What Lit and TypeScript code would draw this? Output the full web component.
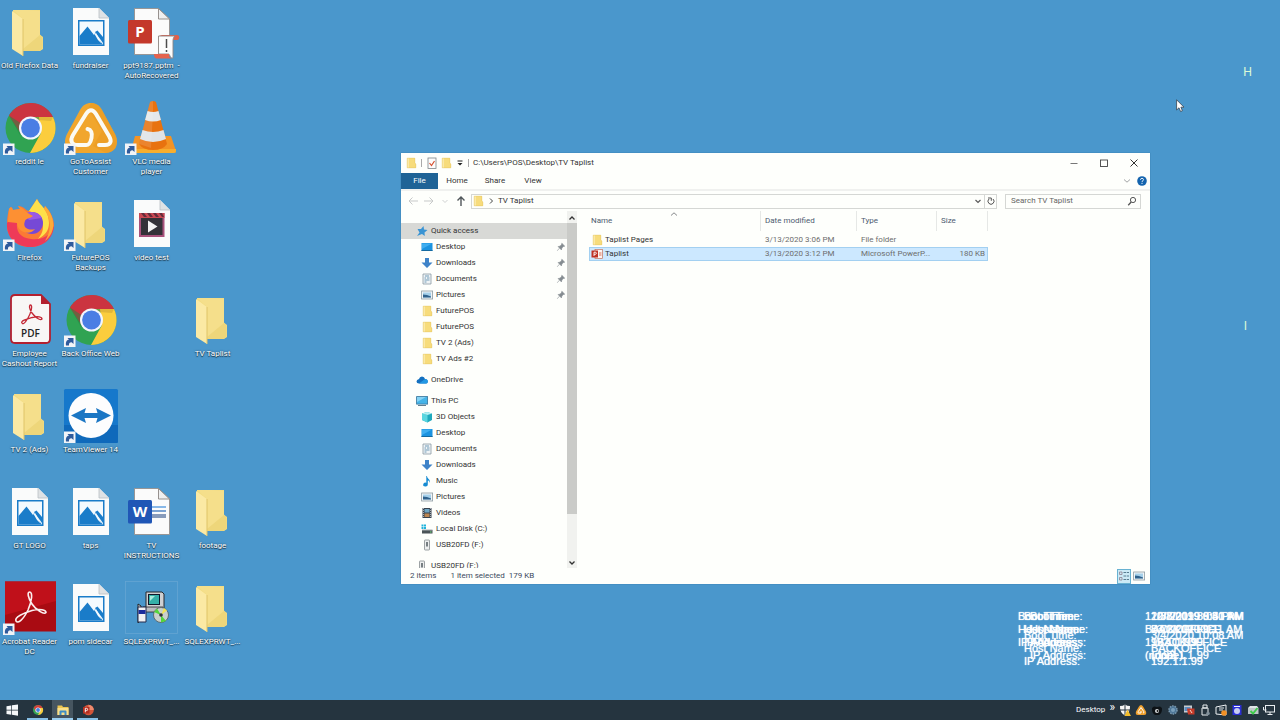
import { LitElement, html, svg, css, TemplateResult } from "lit";
import { customElement, property } from "lit/decorators.js";
import { classMap } from "lit/directives/class-map.js";

type Art = TemplateResult;

/* ---------- large desktop artwork, drawn on a 56 x 56 canvas ---------- */

const folderArt: Art = svg`
  <path d="M12 5H39V30L42 32V44L39 46H20L12 43Z" fill="#f3dd82"/>
  <path d="M39 29.500L41.500 32V44L38 46H22V32Z" fill="#eed67a"/>
  <path d="M11 6L22 14V51L11 44Z" fill="#fbe9a4"/>
  <path d="M12 5H26L39 6V30L22 44V14Z" fill="#f5df8b"/>
  <path d="M22 14V51" stroke="#dfc468" stroke-width="1" fill="none"/>`;

const pageArt: Art = svg`
  <path d="M10 3H36L46 13V50H10Z" fill="#fafbfb"/>
  <path d="M36 3V13H46Z" fill="#dfe2e4"/>
  <path d="M36 3V13H46" fill="none" stroke="#b9c0c4" stroke-width=".8"/>`;

const officePageArt: Art = svg`
  <path d="M10.500 3.500H34.500L45.500 14V49.500H10.500Z" fill="#fbfbfb" stroke="#96908c" stroke-width=".9"/>
  <path d="M34.500 3.500V14H45.500Z" fill="#efefef" stroke="#8c8682" stroke-width=".9"/>`;

const chromeArt: Art = svg`
  <circle cx="28.500" cy="27" r="25" fill="#30a352"/>
  <path d="M7 14.500A25 25 0 0 1 51 16H28.500L19 33Z" fill="#cb3440"/>
  <path d="M51 16A25 25 0 0 1 28 52L38.500 33L37 16Z" fill="#fbcd3d"/>
  <path d="M28.500 16H51L49 20L36 19Z" fill="#c49c33" opacity=".45"/>
  <path d="M7 14.500L18 34L21 31L18.500 22Z" fill="#1b8a41" opacity=".5"/>
  <circle cx="28.500" cy="27" r="11.500" fill="#f4f6fb"/>
  <circle cx="28.500" cy="27" r="9.400" fill="#4a7ee4"/>`;

const artwork: Record<string, Art> = {
  folder: folderArt,
  chrome: chromeArt,
  image: svg`${pageArt}
    <rect x="15" y="15" width="26.500" height="26" fill="#1a7cc9"/>
    <rect x="16.500" y="16.500" width="23.500" height="23" fill="#f4fafe"/>
    <path d="M16.500 31L24.500 21.500L31 30L32.500 27.500L35 34L40 39.500H16.500Z" fill="#1a7cc9"/>
    <path d="M32 27L34.500 25.500L40 32V38Z" fill="#1a7cc9"/>
    <path d="M31.500 29L33 28L38.500 38.500L35 35Z" fill="#f4fafe"/>`,
  recovered: svg`${officePageArt}
    <rect x="4" y="15" width="24" height="23.500" rx="1.500" fill="#c4382b"/>
    <text x="16" y="32" class="mark">P</text>
    <path d="M35 30H53C56 30 56 35 53 35H50Z" fill="#e0604c"/>
    <path d="M34.500 31H51C49.500 32 49 34 49 36V53C46 54 46 49 44.500 49H34.500Z" fill="#fcfcfc" stroke="#8c8481" stroke-width=".9"/>
    <path d="M30 49H45C45 51 45.500 53 47.500 53.500H33C30.500 53.500 30 51 30 49Z" fill="#e4634e"/>
    <path d="M42.500 34V43M42.500 45V47" stroke="#4c4c4c" stroke-width="1.500"/>`,
  goto: svg`
    <path d="M28 2C33 2 36 4 39 9L52 33C57 43 52 52 43 52H13C4 52 -1 43 4 33L17 9C20 4 23 2 28 2Z" fill="#f1a62d"/>
    <path d="M28 2C33 2 36 4 39 9L52 33C57 43 52 52 43 52L30 45L39 30L25 8Z" fill="#e99620" opacity=".45"/>
    <path d="M24.500 28Q30 29 28.500 37T22 44H15C8 44 7 39 10 34L23 13C26 8 30 8 33 13L46 35C49 40 48 44 42 44H36" fill="none" stroke="#fbfaf3" stroke-width="4" stroke-linejoin="round" stroke-linecap="round"/>`,
  vlc: svg`
    <path d="M11 35H47L52 50Q52 52 50 52H9Q7 52 7 50Z" fill="#f39324"/>
    <path d="M7 48H52V50Q52 52 50 52H9Q7 52 7 50Z" fill="#f7ae2e"/>
    <path d="M26 1Q29 -1 32 1L43 43Q39 49 29 49Q19 49 15 43Z" fill="#e8720f"/>
    <path d="M23.500 10Q29 12 34.500 10L37 19Q29 22 21 19Z" fill="#e4e8ea"/>
    <path d="M18.500 29Q29 33 39.500 29L42 38Q29 44 16 38Z" fill="#dfe3e6"/>
    <path d="M26 1Q27 0 29 0V12L27 47L15 43Z" fill="#fff" opacity=".13"/>`,
  firefox: svg`
    <path d="M7 12C9 9 10 10 11 13L18 12L16 9C22 9 24 14 27 14L35 2C38 5 36 8 42 12L43 9C49 15 52 22 52 29C50 42 41 50 28 50C14 50 4 40 5 26C5 21 6 16 7 12Z" fill="#fb7a35"/>
    <path d="M5 26C4 41 15 50 28 50C41 50 51 42 52 29C48 40 39 43 29 42C18 41 14 34 15 26L9 21Z" fill="#ee3a58"/>
    <path d="M27 14L35 2C37 8 47 12 47 26C47 34 43 38 36 42C47 29 38 18 27 14Z" fill="#fee04a"/>
    <path d="M42 12L43 9C53 19 55 35 43 44C50 34 49 21 42 12Z" fill="#fdab38"/>
    <circle cx="30" cy="26" r="11" fill="#7649d6"/>
    <path d="M22 17C28 13 37 15 40 21L27 23Z" fill="#9a5ae6"/>
    <path d="M7 12C9 9 10 10 11 13L18 12L16 9C22 11 24 16 31 19C27 22 24 21 23 24C20 31 27 34 33 32C29 38 16 37 15 26L6 25Z" fill="#fd9033"/>`,
  video: svg`${pageArt}
    <rect x="15" y="16" width="25.500" height="24" fill="#a8527c"/>
    <path d="M15 16H40.500V21H15Z" fill="#ca4953"/>
    <path d="M17 16l3 4h3l-3-4zM23 16l3 4h3l-3-4zM29 16l3 4h3l-3-4zM35 16l3 4h2l-2-4z" fill="#632c3b"/>
    <rect x="17" y="21" width="21.500" height="17" fill="#333238"/>
    <path d="M24 23.500L33.500 29.500L24 35.500Z" fill="#f4f4f4"/>`,
  pdf: svg`
    <path d="M13 2H39L48 11V46Q48 50 44 50H13Q9 50 9 46V6Q9 2 13 2Z" fill="#f8f6f5" stroke="#b3202f" stroke-width="1.800"/>
    <path d="M39 2V11H48Z" fill="#b3202f"/>
    <path d="M20 30C18 28 25 26 30 24.500C36 23 40 24 40 26C38 28 33 24 30 20C27 16 27 12 28.500 12C31 12 29 20 26 25C23 30 21 32 20 30Z" fill="none" stroke="#c42735" stroke-width="1.300"/>
    <text x="28.500" y="44" class="pdf">PDF</text>`,
  teamviewer: svg`
    <rect x="1" y="0" width="54" height="54" rx="1.500" fill="#1678cb"/>
    <path d="M1 36H55V52.500Q55 54 53.500 54H2.500Q1 54 1 52.500Z" fill="#0f69bb"/>
    <circle cx="28" cy="26.500" r="22.500" fill="#fdfdfe"/>
    <path d="M8 26.500L23 19L21.500 24H34.500L33 19L48 26.500L33 34L34.500 29H21.500L23 34Z" fill="#1b76c4"/>`,
  word: svg`${officePageArt}
    <path d="M28 22H42" stroke="#4a93dd" stroke-width="1.300"/>
    <path d="M28 26H42" stroke="#3773bd" stroke-width="1.300"/>
    <path d="M28 30H42M28 32H42" stroke="#163d7c" stroke-width="1.100"/>
    <rect x="4" y="15" width="24" height="23.500" rx="1.500" fill="#2056b6"/>
    <text x="16" y="32" class="mark">W</text>`,
  acrobat: svg`
    <rect x="3" y="0.500" width="51" height="50" fill="#a90b12"/>
    <path d="M3 .5H54V20L3 34Z" fill="#c0101a"/>
    <path d="M14 40C12 36 22 32 30 29.500C38 27.500 44 29 44 31.500C42 34 34 29 30 23C26 17 25 11 27.500 11C31 11 30 20 26 29C21 39 16 43 14 40Z" fill="none" stroke="#fbeeee" stroke-width="1.600"/>`,
  installer: svg`
    <rect x="1.500" y="0.500" width="52" height="52" fill="none" stroke="#65a5d3" stroke-width=".8"/>
    <path d="M22 11H38L40 13V29L38 30H22Z" fill="#cfd0d2" stroke="#26282c" stroke-width="1"/>
    <rect x="24.500" y="13.500" width="11" height="10" fill="#35b0a8" stroke="#10182b" stroke-width="1"/>
    <path d="M26 15H31L26 20Z" fill="#a6ecdd"/>
    <path d="M19 26H39L37 31H20Z" fill="#b9bbbf" stroke="#26282c" stroke-width=".8"/>
    <path d="M14 23L17 25V39L14 42Z" fill="#d8d8dc" stroke="#222"/>
    <path d="M14 26H22V41H14Z" fill="#f1f1f3" stroke="#222a4d" stroke-width="1"/>
    <rect x="14.500" y="29" width="7" height="4" fill="#1b2c9c"/>
    <circle cx="37" cy="34" r="7.500" fill="#c9d0cc" stroke="#525c5c" stroke-width=".8"/>
    <path d="M37 34L30 31L33 27.500ZM37 34L42 40L37 41.500Z" fill="#53d63c"/>
    <path d="M37 34L40 27L43 29.500Z" fill="#f1e556"/>
    <circle cx="37" cy="34" r="1.800" fill="#333"/>`,
};

const shortcutArt: Art = svg`
  <rect x="1" y="42.500" width="11.500" height="11.500" fill="#f2f4f7"/>
  <path d="M3 52.500C2.500 48.500 4 46.800 6 46.800L4.500 45H10.500V51L8.600 49.300C6.500 49.300 5.800 50.500 6 52.500Z" fill="#2f5b9c"/>`;

/* ---------- small artwork, drawn on a 12 x 12 canvas ---------- */

const glyphs: Record<string, Art> = {
  folder: svg`<path d="M2 1H10V6L11 7V11H2Z" fill="#f7dc7c"/><path d="M2 1H4V11H2Z" fill="#fbe9a6"/><path d="M2.200 1.200H9.800V6L10.800 7V10.800H2.200Z" fill="none" stroke="#e5c667" stroke-width=".5"/>`,
  star: svg`<path d="M7.500 1L8 4.500L11.500 5L8.500 7.500L8.800 11L6 9L1 11L3.500 7.500L1.500 4L5 4Z" fill="#3a94d3"/>`,
  desktop: svg`<rect x=".5" y="2" width="11" height="8" fill="#1b93e0"/><path d="M1 2.500H11L1 8Z" fill="#3faef0"/><path d="M.5 9.500H11.500" stroke="#14699f"/>`,
  download: svg`<path d="M4 1H8V5.500H11.500L6 11L.5 5.500H4Z" fill="#3e83c8"/>`,
  document: svg`<path d="M2 1H10V11H2Z" fill="#eef3f5" stroke="#8b9ba3" stroke-width=".8"/><path d="M4 3H8M3.500 5H5M6 5H8.500M3.500 7H8.500M3.500 9H5.500" stroke="#5187a7" stroke-width=".8"/>`,
  picture: svg`<rect x=".6" y="2" width="11" height="8" fill="#f1f5f7" stroke="#8e9ba2" stroke-width=".8"/><rect x="2" y="3.500" width="8" height="5" fill="#a5d0ea"/><path d="M2 5.500L6 6L10 7.500V8.500H2Z" fill="#30628c"/>`,
  cloud: svg`<path d="M3 9.500Q.5 9.500 .5 7.500T3 5Q3.500 2.500 6 2.500T9 5Q11.800 5 11.800 7.500T9.500 9.500Z" fill="#1470c0"/><path d="M3 9.500L9 5Q11.800 5 11.800 7.500T9.500 9.500Z" fill="#2398e4"/>`,
  pc: svg`<rect x=".6" y="1.600" width="11" height="7.500" fill="#45b4e8" stroke="#39749a" stroke-width=".8"/><path d="M1 2H10L1 7Z" fill="#86d3f5"/><path d="M2 10.500H10" stroke="#617f90"/>`,
  cube: svg`<path d="M1 2.500L6 1L11 2.500V9L6.500 11.500L1 9Z" fill="#1fa9bd"/><path d="M1 2.500L6.500 4V11.500L1 9Z" fill="#59d6df"/><path d="M1 2.500L6 1L11 2.500L6.500 4Z" fill="#b2f0f2"/>`,
  music: svg`<path d="M6 1C6 4 10 4 8.500 8C8.500 6 7.500 5.500 6.800 5.500V9.500A2.300 1.900 0 1 1 5.300 7.800V1Z" fill="#168bd2"/>`,
  film: svg`<rect x="1.500" y="1" width="9" height="10" fill="#38424e"/><rect x="3.500" y="2" width="5" height="3.500" fill="#6fa6c4"/><rect x="3.500" y="6.500" width="5" height="3.500" fill="#bb8551"/><path d="M2.500 1V11M9.500 1V11" stroke="#d2d8dc" stroke-width=".7" stroke-dasharray="1"/>`,
  disk: svg`<path d="M.5 1.500H2.500V3.500H.5ZM3 1.500H5V3.500H3ZM.5 4H2.500V6H.5ZM3 4H5V6H3Z" fill="#20b3dc"/><rect x="1" y="7" width="10.500" height="3.500" fill="#4b5458"/><path d="M1 7H11.500" stroke="#a9b1b4"/><path d="M9 9H10.500" stroke="#6de07a"/>`,
  usb: svg`<rect x="3.500" y="1" width="5" height="10" rx=".6" fill="#eceeee" stroke="#868d8f" stroke-width=".8"/><rect x="5" y="3" width="2" height="4.500" fill="#777f82"/>`,
  slides: svg`<rect x="4" y="1.500" width="7.500" height="9" fill="#fdf4f1" stroke="#c2715c" stroke-width=".7"/><path d="M8 5H10.500M8 7H10.500" stroke="#dd7057"/><rect x=".5" y="2.500" width="6.500" height="7" fill="#bf3224"/><path d="M3 8V4.200H4.300A1 1 0 0 1 4.300 6.300H3" fill="none" stroke="#fff" stroke-width=".9"/>`,
  pin: svg`<path d="M7 1.500L10.500 5L8.500 5.500L7 7.500L6.500 9.500L2.500 5.500L4.500 5L6.500 3.500ZM4 7.500L1.500 10.500" fill="#848b90" stroke="#848b90" stroke-width=".7"/>`,
  check: svg`<rect x="2" y="1" width="8" height="10.500" fill="#fdfdfd" stroke="#7d8488" stroke-width=".8"/><path d="M3.500 6L5.500 8.500L8.500 4" fill="none" stroke="#d6502f" stroke-width="1.200"/>`,
  caret: svg`<path d="M3.500 4H8.500" stroke="#222"/><path d="M3.500 6H8.500L6 8.500Z" fill="#222"/>`,
  back: svg`<path d="M11 6H2M5.500 2.500L2 6L5.500 9.500" fill="none" stroke="#c7c9c9"/>`,
  forward: svg`<path d="M1 6H10M6.500 2.500L10 6L6.500 9.500" fill="none" stroke="#c7c9c9"/>`,
  recent: svg`<path d="M3.500 5L6 7.500L8.500 5" fill="none" stroke="#d0d2d2"/>`,
  up: svg`<path d="M6 11V2M2.500 5.500L6 2L9.500 5.500" fill="none" stroke="#50565a" stroke-width="1.400"/>`,
  right: svg`<path d="M5 3.500L7.500 6L5 8.500" fill="none" stroke="#444" stroke-width="1"/>`,
  down: svg`<path d="M3.500 5L6 7.500L8.500 5" fill="none" stroke="#5a5a5a" stroke-width="1.200"/>`,
  fold: svg`<path d="M3 4.500L6 7.200L9 4.500" fill="none" stroke="#96999b" stroke-width=".9"/>`,
  sort: svg`<path d="M3 7.500L6 4.800L9 7.500" fill="none" stroke="#787b7e" stroke-width=".9"/>`,
  top: svg`<path d="M3.500 7.500L6 5L8.500 7.500" fill="none" stroke="#333" stroke-width="1.300"/>`,
  bottom: svg`<path d="M3.500 4.500L6 7L8.500 4.500" fill="none" stroke="#333" stroke-width="1.300"/>`,
  refresh: svg`<path d="M4 4A3 3 0 1 0 8 4M3 3H6.300V5.800" fill="none" stroke="#555" stroke-width="1"/>`,
  search: svg`<circle cx="7" cy="5" r="2.600" fill="none" stroke="#555"/><path d="M5.200 7L2.200 10.200" stroke="#555" stroke-width="1.300"/>`,
  help: svg`<circle cx="6" cy="6" r="4.800" fill="#1464ae"/><path d="M4.500 4.800Q4.600 3.300 6 3.300T7.500 4.700Q7.500 5.500 6 6.500V7.200M6 8V9" fill="none" stroke="#fff" stroke-width=".9"/>`,
  minimise: svg`<path d="M2.500 6.500H9.500" stroke="#777" stroke-width="1"/>`,
  maximise: svg`<rect x="2.500" y="3" width="7" height="6.500" fill="none" stroke="#444" stroke-width=".9"/>`,
  close: svg`<path d="M2.500 2.500L9.500 9.500M9.500 2.500L2.500 9.500" stroke="#333"/>`,
  details: svg`<path d="M1.500 2H4V4.500H1.500ZM1.500 7.500H4V10H1.500Z" fill="none" stroke="#8f8290" stroke-width=".8"/><path d="M5.500 2.500H8M8.700 2.500H11M5.500 6H8M8.700 6H11M5.500 9.500H8M8.700 9.500H11" stroke="#4c7286" stroke-width=".9"/>`,
  windows: svg`<path d="M.5 2.200L5.300 1.400V5.700H.5ZM6 1.300L12 .4V5.700H6ZM.5 6.400H5.300V10.700L.5 10ZM6 6.400H12V11.700L6 10.800Z" fill="#f5f8fa"/>`,
  chrome: svg`<circle cx="6" cy="6" r="5" fill="#33a455"/><path d="M1.700 3.500A5 5 0 0 1 10.700 4H6L4 8Z" fill="#d43f3a"/><path d="M10.700 4A5 5 0 0 1 6 11L8 7V4Z" fill="#f9cb3e"/><circle cx="6" cy="6" r="2.600" fill="#f2f5f9"/><circle cx="6" cy="6" r="1.900" fill="#467fe0"/>`,
  explorer: svg`<path d="M.5 1.500H5L6 3H11.500V11H.5Z" fill="#eec650"/><path d="M.5 4H11.500V11H.5Z" fill="#fbe08a"/><path d="M2.500 11V7.500Q2.500 6.500 3.500 6.500H8.500Q9.500 6.500 9.500 7.500V11H7.500V8.500H4.500V11Z" fill="#3e8dc6"/>`,
  powerpoint: svg`<circle cx="6.500" cy="6" r="5.300" fill="#d35438"/><path d="M6.500 .7A5.300 5.300 0 0 1 11.800 6H6.500Z" fill="#ee8a6d"/><rect x="1" y="3" width="6.500" height="6.500" fill="#b52e20"/><path d="M3.300 8.300V4.300H4.500A1.100 1.100 0 0 1 4.500 6.600H3.300" fill="none" stroke="#fff" stroke-width=".9"/>`,
  shield: svg`<path d="M6 .5Q8 2 11 2Q11.500 8.500 6 11.500Q.5 8.500 1 2Q4 2 6 .5Z" fill="#f5f5f5"/><path d="M6 .5V11.500M1 6H11" stroke="#24333e"/><path d="M8.500 5.500L12 12H5.500Z" fill="#f2bd2c"/>`,
  assist: svg`<path d="M6 1Q7.300 1 8 2.500L11 7.500Q12 11 9 11H3Q0 11 1 7.500L4 2.500Q4.700 1 6 1Z" fill="#f0a02d"/><path d="M6 7V9H3.500Q2.500 9 3.300 7.500L6 3.500L8.700 7.500Q9.500 9 8 9" fill="none" stroke="#fff"/>`,
  eye: svg`<path d="M1 4L3 2.500L6 3L9 2.500L11 4Q11.500 9 8 11H4Q.5 9 1 4Z" fill="#0d1216"/><circle cx="6" cy="7" r="2" fill="#d7dbdd"/><circle cx="6.500" cy="7" r=".9" fill="#111"/>`,
  gear: svg`<circle cx="6" cy="6" r="4" fill="#4c7597" stroke="#7795ab" stroke-width="1.600" stroke-dasharray="1.500 1"/><circle cx="6" cy="6" r="2" fill="#7ba0bb"/>`,
  alert: svg`<rect x="1" y="1.500" width="8" height="7" fill="#c8ccd1"/><rect x="1.500" y="3" width="6" height="4" fill="#5d8ec2"/><path d="M4 4.500H11.500V10.500H5Z" fill="#c63b2a"/><path d="M7 6L9 9" stroke="#f2d9c9"/>`,
  eject: svg`<path d="M4 1H8V4H4Z" fill="none" stroke="#e8ecef"/><path d="M3 4H9V11H3Z" fill="none" stroke="#e8ecef"/><circle cx="9" cy="9.500" r="1.800" fill="#80909b"/>`,
  sync: svg`<path d="M1 3L11 1V11L1 10Z" fill="none" stroke="#eef1f3"/><path d="M4 4H9M4 6H8" stroke="#dfe5e9"/><circle cx="9" cy="9" r="2.800" fill="#f39126"/>`,
  badge: svg`<path d="M1.500 1H10.500V11H1.500Z" fill="#2b2ed4"/><circle cx="6" cy="7" r="3" fill="#c9cdf3"/><path d="M3 2.500H9" stroke="#f0f0ff"/>`,
  drive: svg`<path d="M1 4H11.500V10H1Z" fill="#bfc7ca"/><path d="M1 4L3 2H10L11.500 4Z" fill="#dfe5e7"/><path d="M3.500 7L6 9.500L10.500 4" fill="none" stroke="#3ecc4b" stroke-width="1.900"/>`,
  network: svg`<rect x="2.500" y="1.500" width="9" height="6.500" fill="none" stroke="#e9edf0"/><path d="M.5 3V6H3.500M4.500 10.500H9.500M7 8V10.500" fill="none" stroke="#e9edf0"/>`,
};

@customElement("small-glyph")
class SmallGlyph extends LitElement {
  @property() name = "folder";
  static styles = css`
    :host { display: inline-flex; flex: none; width: 12px; height: 12px; }
    svg { width: 100%; height: 100%; }
  `;
  render() {
    return html`<svg viewBox="0 0 12 12" aria-hidden="true">${glyphs[this.name]}</svg>`;
  }
}

@customElement("desktop-icon")
class DesktopIcon extends LitElement {
  @property() art = "folder";
  @property() label = "";
  @property({ type: Boolean }) shortcut = false;
  static styles = css`
    :host { display: flex; justify-content: center; min-width: 0; }
    .icon {
      display: flex; flex-direction: column; align-items: center;
      border: 0; padding: 0; background: none; color: #fff;
      font: 8px/10px Roboto, "Open Sans", sans-serif;
      text-shadow: 0 1px 1px #000a, 0 0 2px #0008;
    }
    .art { width: 56px; height: 56px; flex: none; }
    .label { white-space: pre; text-align: center; }
    .mark { font: bold 15px "Open Sans", sans-serif; fill: #fff; text-anchor: middle; text-shadow: none; }
    .pdf { font: 600 10px "Open Sans", sans-serif; fill: #222; text-anchor: middle; text-shadow: none; }
  `;
  render() {
    return html`<button class="icon">
      <svg class="art" viewBox="0 0 56 56" aria-hidden="true">${artwork[this.art]}${this.shortcut ? shortcutArt : null}</svg>
      <span class="label">${this.label}</span>
    </button>`;
  }
}

interface TreeItem { icon: string; text: string; root?: boolean; pinned?: boolean; active?: boolean; }

const tree: TreeItem[] = [
  { icon: "star", text: "Quick access", root: true, active: true },
  { icon: "desktop", text: "Desktop", pinned: true },
  { icon: "download", text: "Downloads", pinned: true },
  { icon: "document", text: "Documents", pinned: true },
  { icon: "picture", text: "Pictures", pinned: true },
  { icon: "folder", text: "FuturePOS" },
  { icon: "folder", text: "FuturePOS" },
  { icon: "folder", text: "TV 2 (Ads)" },
  { icon: "folder", text: "TV Ads #2" },
  { icon: "cloud", text: "OneDrive", root: true },
  { icon: "pc", text: "This PC", root: true },
  { icon: "cube", text: "3D Objects" },
  { icon: "desktop", text: "Desktop" },
  { icon: "document", text: "Documents" },
  { icon: "download", text: "Downloads" },
  { icon: "music", text: "Music" },
  { icon: "picture", text: "Pictures" },
  { icon: "film", text: "Videos" },
  { icon: "disk", text: "Local Disk (C:)" },
  { icon: "usb", text: "USB20FD (F:)" },
  { icon: "usb", text: "USB20FD (F:)", root: true },
];

const files = [
  { icon: "folder", name: "Taplist Pages", date: "3/13/2020 3:06 PM", type: "File folder", size: "", selected: false },
  { icon: "slides", name: "Taplist", date: "3/13/2020 3:12 PM", type: "Microsoft PowerP...", size: "180 KB", selected: true },
];

@customElement("explorer-window")
class ExplorerWindow extends LitElement {
  static styles = css`
    :host {
      display: flex; flex-direction: column; background: #fefffc; color: #333;
      font: 8px/16px Roboto, "Open Sans", sans-serif; box-shadow: 0 0 1px #2b6c9c;
    }
    button, input { font: inherit; color: inherit; border: 0; padding: 0; background: none; }
    button { display: inline-flex; align-items: center; justify-content: center; }
    .title { display: flex; align-items: center; height: 20px; padding-left: 4px; gap: 4px; }
    .title .bar { width: 1px; height: 8px; background: #aaa; }
    .title .quick { display: flex; align-items: center; gap: 2px; }
    .title .path { flex: 1; }
    .title .control { width: 30px; height: 20px; }
    .title .controls { display: flex; padding-right: 1px; }
    .tabs { display: flex; height: 16px; align-items: stretch; border-bottom: 2px solid #f0f1ef; }
    .tab { width: 38px; }
    .tab.file { background: #1f6396; color: #fff; width: 37px; }
    .tabs .end { margin-left: auto; display: flex; align-items: center; gap: 3px; padding-right: 2px; }
    .address { display: flex; align-items: center; height: 20px; padding: 0 9px 0 6px; gap: 8px; }
    .address .nav { display: flex; align-items: center; gap: 4px; }
    .crumbs { flex: 1; display: flex; align-items: center; gap: 2px; height: 13px; border: 1px solid #d5d7d4; margin-left: -4px; }
    .crumbs .drop { margin-left: auto; border-right: 1px solid #d5d7d4; height: 13px; }
    .crumbs .reload { width: 10px; }
    .crumbs { gap: 1px; }
    .search { display: flex; align-items: center; width: 127px; height: 13px; border: 1px solid #d5d7d4; padding: 0 2px 0 5px; }
    .search input { flex: 1; min-width: 0; height: 13px; outline: 0; }
    .search input::placeholder { color: #666; opacity: 1; }
    .body { flex: 1; display: flex; min-height: 0; }
    .tree { flex: none; width: 166px; margin: 0; padding: 12px 0 0; list-style: none; overflow: hidden; box-sizing: border-box; }
    .node { display: flex; align-items: center; height: 16px; gap: 3px; padding: 0 1px 0 20px; }
    .node.root { padding-left: 15px; margin-top: 5px; }
    .node.active { background: #d8d9d6; margin-top: 0; }
    .node .pin { margin-left: auto; width: 10px; height: 10px; }
    .scroll { flex: none; display: flex; flex-direction: column; width: 10px; background: #f1f2ef; padding-top: 2px; }
    .scroll button { height: 10px; }
    .scroll .thumb { flex: 0 0 82%; background: #cacbc8; }
    .scroll .last { margin-top: auto; }
    .list { flex: 1; padding: 0 12px; }
    table { border-collapse: separate; border-spacing: 0; table-layout: fixed; width: 399px; line-height: 14px; }
    th, td { box-sizing: border-box; }
    th { font-weight: 400; text-align: left; color: #4d5b70; height: 20px; padding: 0 0 0 4px; border-right: 1px solid #e6e8e6; }
    th:first-child { padding-left: 2px; }
    th .head { display: flex; align-items: center; }
    th .sort { position: absolute; transform: translate(77px, -7px); }
    .name { width: 172px; } .date { width: 96px; } .type { width: 80px; } .size { width: 51px; }
    td { height: 14px; padding: 0 0 0 4px; color: #6d6d6d; white-space: nowrap; }
    td:first-child { padding-left: 2px; color: #333; }
    td:last-child { text-align: right; padding-right: 3px; }
    .spacer td { height: 2px; line-height: 0; }
    .entry { display: flex; align-items: center; gap: 2px; }
    .selected { background: #cce8ff; outline: 1px solid #a3d0f1; outline-offset: -1px; }
    .status { display: flex; align-items: center; height: 16px; padding: 0 4px 0 9px; gap: 14px; color: #3c4a60; }
    .status .views { margin-left: auto; display: flex; gap: 1px; align-items: center; }
    .views button { width: 14px; height: 15px; }
    .views .on { background: #cbeaf6; box-shadow: inset 0 0 0 1px #68b2d2; }
  `;
  render() {
    return html`
      <header class="title">
        <small-glyph name="folder"></small-glyph><span class="bar"></span>
        <span class="quick">
          <button aria-label="Properties"><small-glyph name="check"></small-glyph></button>
          <button aria-label="New folder"><small-glyph name="folder"></small-glyph></button>
          <button aria-label="Customize"><small-glyph name="caret"></small-glyph></button>
          <span class="bar"></span>
        </span>
        <span class="path">C:\\Users\\POS\\Desktop\\TV Taplist</span>
        <span class="controls">
          <button class="control" aria-label="Minimize"><small-glyph name="minimise"></small-glyph></button>
          <button class="control" aria-label="Maximize"><small-glyph name="maximise"></small-glyph></button>
          <button class="control" aria-label="Close"><small-glyph name="close"></small-glyph></button>
        </span>
      </header>
      <nav class="tabs">
        <button class="tab file">File</button>
        <button class="tab">Home</button>
        <button class="tab">Share</button>
        <button class="tab">View</button>
        <span class="end">
          <button aria-label="Expand ribbon"><small-glyph name="fold"></small-glyph></button>
          <button aria-label="Help"><small-glyph name="help"></small-glyph></button>
        </span>
      </nav>
      <div class="address">
        <span class="nav">
          ${["back", "forward", "recent", "up"].map(n => html`<button aria-label=${n}><small-glyph name=${n}></small-glyph></button>`)}
        </span>
        <div class="crumbs">
          <small-glyph name="folder"></small-glyph><small-glyph name="right"></small-glyph>
          <button>TV Taplist</button>
          <button class="drop" aria-label="Previous locations"><small-glyph name="down"></small-glyph></button>
          <button class="reload" aria-label="Refresh"><small-glyph name="refresh"></small-glyph></button>
        </div>
        <label class="search">
          <input type="text" placeholder="Search TV Taplist" aria-label="Search TV Taplist" />
          <small-glyph name="search"></small-glyph>
        </label>
      </div>
      <div class="body">
        <ul class="tree">
          ${tree.map(t => html`<li class=${classMap({ node: true, root: !!t.root, active: !!t.active })}>
            <small-glyph name=${t.icon}></small-glyph><span>${t.text}</span>
            ${t.pinned ? html`<small-glyph class="pin" name="pin"></small-glyph>` : null}
          </li>`)}
        </ul>
        <div class="scroll">
          <button aria-label="Scroll up"><small-glyph name="top"></small-glyph></button>
          <div class="thumb"></div>
          <button class="last" aria-label="Scroll down"><small-glyph name="bottom"></small-glyph></button>
        </div>
        <div class="list">
          <table>
            <thead><tr>
              <th class="name"><span class="head">Name<small-glyph class="sort" name="sort"></small-glyph></span></th>
              <th class="date">Date modified</th><th class="type">Type</th><th class="size">Size</th>
            </tr></thead>
            <tbody>
              <tr class="spacer"><td colspan="4"></td></tr>
              ${files.map(f => html`<tr class=${classMap({ selected: f.selected })}>
                <td><span class="entry"><small-glyph name=${f.icon}></small-glyph>${f.name}</span></td>
                <td>${f.date}</td><td>${f.type}</td><td>${f.size}</td>
              </tr>`)}
            </tbody>
          </table>
        </div>
      </div>
      <footer class="status">
        <span>2 items</span><span>1 item selected&nbsp; 179 KB</span>
        <span class="views">
          <button class="on" aria-label="Details"><small-glyph name="details"></small-glyph></button>
          <button aria-label="Large icons"><small-glyph name="picture"></small-glyph></button>
        </span>
      </footer>`;
  }
}

interface Shortcut { art: string; label: string; col: number; row: number; link?: boolean; }

const shortcuts: Shortcut[] = [
  { art: "folder", label: "Old Firefox Data", col: 1, row: 1 },
  { art: "image", label: "fundraiser", col: 2, row: 1 },
  { art: "recovered", label: "ppt9187.pptm  -\nAutoRecovered", col: 3, row: 1 },
  { art: "chrome", label: "reddit le", col: 1, row: 2, link: true },
  { art: "goto", label: "GoToAssist\nCustomer", col: 2, row: 2, link: true },
  { art: "vlc", label: "VLC media\nplayer", col: 3, row: 2, link: true },
  { art: "firefox", label: "Firefox", col: 1, row: 3, link: true },
  { art: "folder", label: "FuturePOS\nBackups", col: 2, row: 3, link: true },
  { art: "video", label: "video test", col: 3, row: 3 },
  { art: "pdf", label: "Employee\nCashout Report", col: 1, row: 4 },
  { art: "chrome", label: "Back Office Web", col: 2, row: 4, link: true },
  { art: "folder", label: "TV Taplist", col: 4, row: 4 },
  { art: "folder", label: "TV 2 (Ads)", col: 1, row: 5 },
  { art: "teamviewer", label: "TeamViewer 14", col: 2, row: 5, link: true },
  { art: "image", label: "GT LOGO", col: 1, row: 6 },
  { art: "image", label: "taps", col: 2, row: 6 },
  { art: "word", label: "TV\nINSTRUCTIONS", col: 3, row: 6 },
  { art: "folder", label: "footage", col: 4, row: 6 },
  { art: "acrobat", label: "Acrobat Reader\nDC", col: 1, row: 7, link: true },
  { art: "image", label: "pom sidecar", col: 2, row: 7 },
  { art: "installer", label: "SQLEXPRWT_...", col: 3, row: 7 },
  { art: "folder", label: "SQLEXPRWT_...", col: 4, row: 7 },
];

/* Host details stamped on the wallpaper several times, each pass slightly shifted. */
const stamps = [
  { place: "first", rows: [["Boot Time:", "12/3/2019 8:05 PM"], ["Host Name:", "BACKOFFICE"], ["IP Address:", "192.1.1.99"], ["", "(none)"]] },
  { place: "second", rows: [["Boot Time:", "10/8/2019 9:41 AM"], ["Host Name:", "BACKOFFICE"], ["IP Address:", "192.1.1.99"], ["", "(none)"]] },
  { place: "third", rows: [["Boot Time:", "2/7/2019 6:30 PM"], ["Host Name:", "3/2/2020 9:11 AM"], ["IP Address:", "BACKOFFICE"], ["IP Address:", "192.1.1.99"]] },
  { place: "fourth", rows: [["Boot Time:", "3/4/2020 10:08 AM"], ["Host Name:", "BACKOFFICE"], ["IP Address:", "192.1.1.99"]] },
];

const tray = ["shield", "assist", "eye", "gear", "alert", "eject", "sync", "badge", "drive", "network"];

@customElement("app-root")
class AppRoot extends LitElement {
  static styles = css`
    :host {
      display: flex; flex-direction: column; height: 100vh; overflow: hidden; position: relative;
      background: #4a97cc; font: 8px/10px Roboto, "Open Sans", sans-serif; color: #fff;
    }
    .desktop { flex: 1; min-height: 0; position: relative; }
    .grid { display: grid; grid-template-columns: repeat(4, 61px); grid-auto-rows: 96px; padding-top: 5px; margin-left: -1px; }
    .window { position: absolute; left: 401px; right: 130px; top: 153px; height: 431px; }
    .stamp {
      position: absolute; top: 610px; left: calc(100% - 262px); margin: 0;
      display: grid; grid-template-columns: 127px max-content; grid-auto-rows: 13px;
      font: 11px/13px "Liberation Sans", Arial, sans-serif; text-shadow: 0 0 1px #fff;
    }
    .stamp dd { margin: 0; }
    .second, .fourth { left: calc(100% - 256px); }
    .third { left: calc(100% - 250px); }
    .fourth { top: 629px; }
    .letter { position: absolute; font: 12px/12px "Liberation Sans", Arial, sans-serif; color: #dcfbd6; }
    .letter.h { right: 28px; top: 66px; }
    .letter.i { right: 33px; top: 320px; }
    .cursor { position: absolute; left: 1176px; top: 99px; width: 9px; height: 14px; }
    .taskbar { flex: none; display: flex; align-items: stretch; height: 20px; background: #25343f; }
    .taskbar button { border: 0; padding: 0; background: none; color: inherit; display: flex; align-items: center; justify-content: center; font: inherit; }
    .start { width: 24px; }
    .apps { display: flex; gap: 4px; padding-left: 3px; }
    .apps .app { width: 21px; box-shadow: inset 0 -2px #86bfe6; }
    .apps .app.on { background: #465560; box-shadow: inset 0 -2px #9cd0f2; }
    .tray { margin-left: auto; display: flex; align-items: center; gap: 4px; padding-right: 5px; }
    .tray .more { font-size: 12px; margin-bottom: 6px; }
  `;
  render() {
    return html`
      <main class="desktop">
        <div class="grid">
          ${shortcuts.map(s => html`<desktop-icon art=${s.art} label=${s.label} ?shortcut=${!!s.link}
            style="grid-area: ${s.row} / ${s.col}"></desktop-icon>`)}
        </div>
        ${stamps.map(s => html`<dl class="stamp ${s.place}">${s.rows.map(([k, v]) => html`<dt>${k}</dt><dd>${v}</dd>`)}</dl>`)}
        <span class="letter h">H</span>
        <span class="letter i">I</span>
        <explorer-window class="window"></explorer-window>
        <svg class="cursor" viewBox="0 0 9 14" aria-hidden="true">
          <path d="M.6 .8V11L3 8.800L4.600 12.500L6.400 11.700L4.900 8.200H8Z" fill="#fff" stroke="#39424f" stroke-width=".8"/>
        </svg>
      </main>
      <footer class="taskbar">
        <button class="start" aria-label="Start"><small-glyph name="windows"></small-glyph></button>
        <div class="apps">
          <button class="app" aria-label="Chrome"><small-glyph name="chrome"></small-glyph></button>
          <button class="app on" aria-label="File Explorer"><small-glyph name="explorer"></small-glyph></button>
          <button class="app" aria-label="PowerPoint"><small-glyph name="powerpoint"></small-glyph></button>
        </div>
        <div class="tray">
          <span>Desktop</span><span class="more">»</span>
          ${tray.map(n => html`<small-glyph name=${n}></small-glyph>`)}
        </div>
      </footer>`;
  }
}
